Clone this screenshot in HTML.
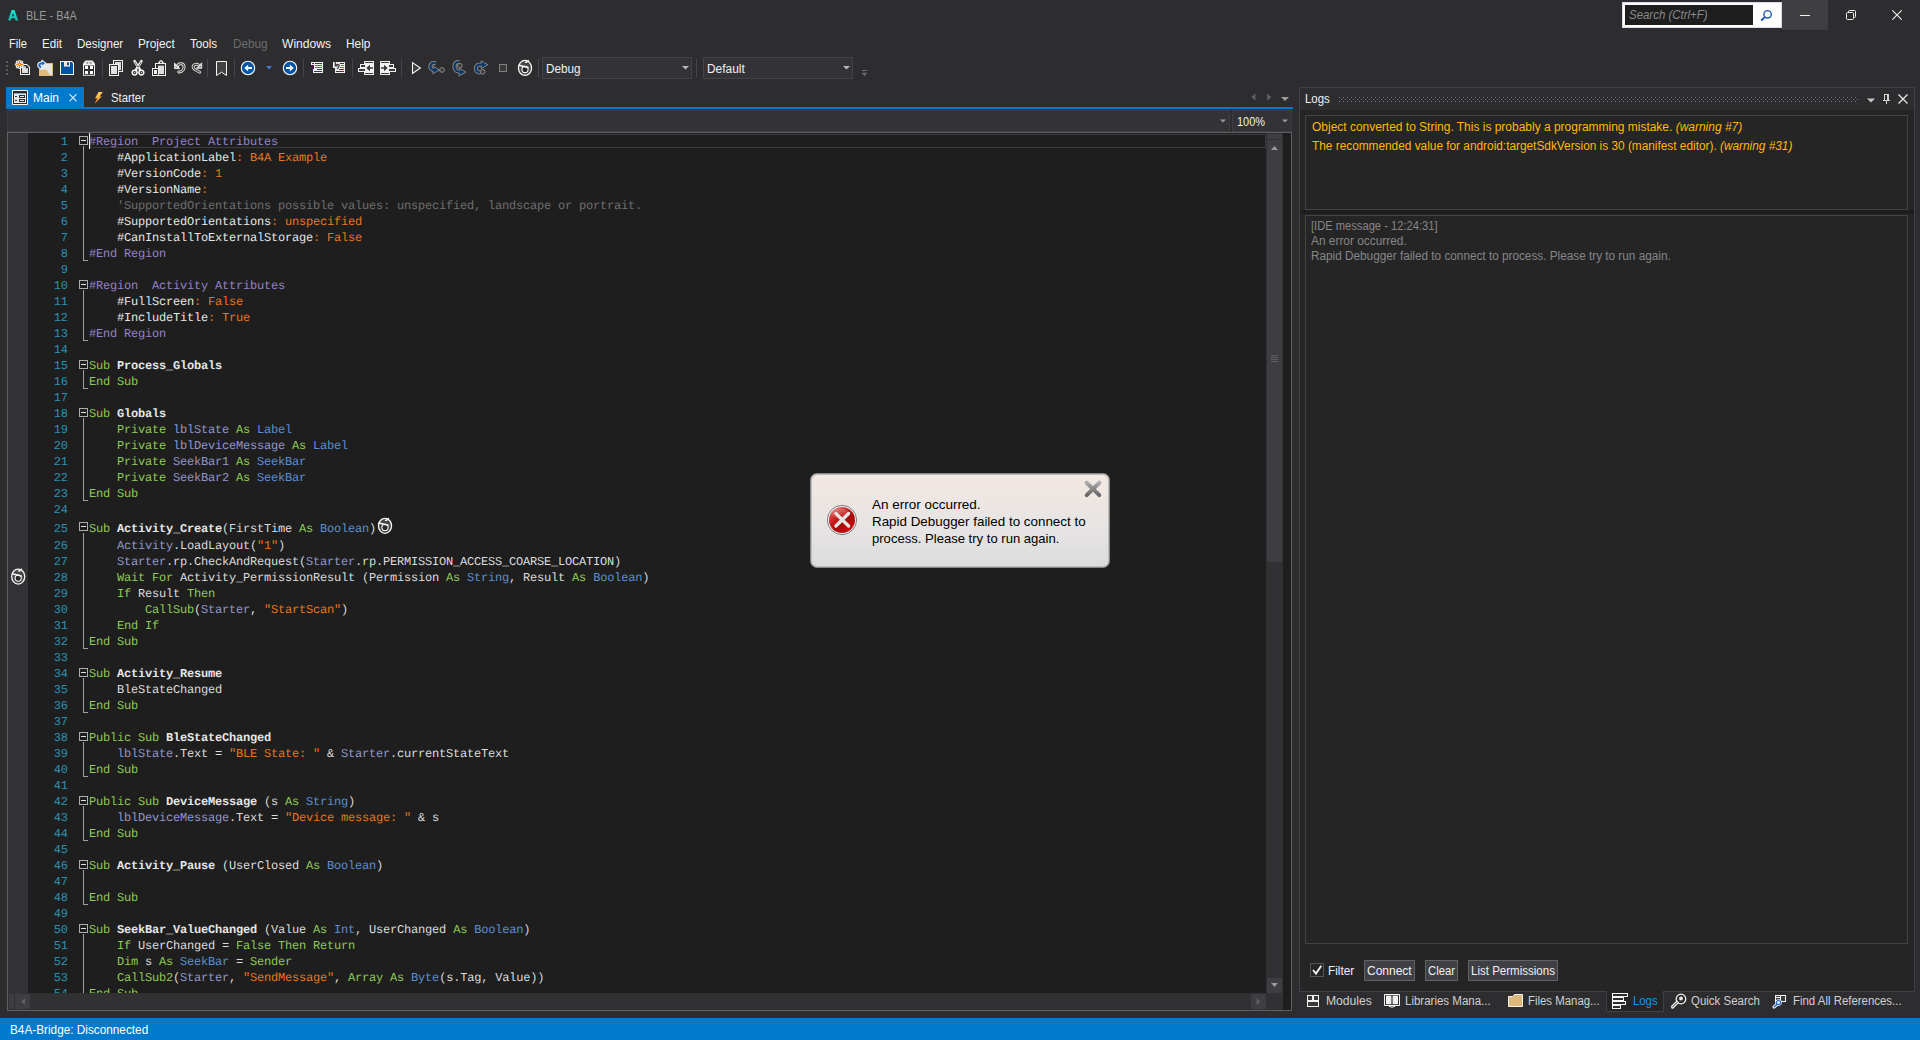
<!DOCTYPE html>
<html><head><meta charset="utf-8"><title>BLE - B4A</title>
<style>
*{margin:0;padding:0;box-sizing:border-box}
html,body{width:1920px;height:1040px;overflow:hidden;background:#2d2d30}
body{position:relative;font-family:"Liberation Sans",sans-serif;font-size:12px;color:#f1f1f1}
#root{position:absolute;left:0;top:0;width:1920px;height:1040px;overflow:hidden}
#root div,#root span.t,#root svg{position:absolute}
#root svg{overflow:visible}
.t{white-space:nowrap;line-height:16px;height:16px}
.t i{font-style:italic}
/* code */
#codewrap{left:0;top:0;width:1300px;height:1040px;overflow:hidden;clip-path:inset(133px 34px 47px 8px)}
.ln,.cl{font-family:"Liberation Mono",monospace;font-size:12px;letter-spacing:-0.200px;text-rendering:geometricPrecision;line-height:16px;height:16px;white-space:pre}
.ln{left:28px;width:39.7px;text-align:right;color:#2b91af}
.cl{left:89px;color:#dcdcdc}
.cl span{position:static}
.k{color:#8fca52}.y{color:#5b8fd0}.v{color:#9197c9}.s{color:#e8761a}.c{color:#6e6e6e}.r{color:#9682c4}
.a{color:#e6e6e6}.o{color:#e8761a}.n{color:#e6e6e6;font-weight:bold}.p{color:#dcdcdc}
.fb{left:79px;width:9px;height:9px;border:1px solid #adadad;background:#1e1e1e}
.fb:after{content:"";position:absolute;left:1px;top:3px;width:5px;height:1px;background:#e0e0e0}
.fv{left:83px;width:1px;background:#a0a0a0}
.fh{left:83px;width:5px;height:1px;background:#a0a0a0}
.sep{width:1px;height:18px;top:59px;background:#46464a}
.btn{background:#3f3f46;border:1px solid #626262}
.dd{width:0;height:0;border:3px solid transparent;border-bottom:0}
</style></head><body><div id="root">

<!-- title bar -->
<svg style="left:8px;top:9.500px" width="10.200" height="10.500" viewBox="0 0 10.200 10.500"><defs><linearGradient id="ag" x1="0" y1="0" x2="0" y2="1"><stop offset="0" stop-color="#18ecdc"/><stop offset="1" stop-color="#14b8a6"/></linearGradient></defs><path d="M0 10.400 L3.700 0 H6.500 L10.200 10.400 H7.500 L6.800 8.300 H3.400 L2.700 10.400 Z M4 6.200 H6.200 L5.100 2.800 Z" fill="url(#ag)"/></svg>
<span class="t" style="transform-origin:0 0;transform:scaleX(0.9049);left:26.2px;top:8px;color:#999">BLE - B4A</span>

<!-- search -->
<div style="left:1622px;top:2px;width:160px;height:26px;background:#fdfdfd;border:1px solid #d6deec"></div>
<div style="left:1625px;top:5px;width:128px;height:20px;background:#1e1e1e"></div>
<span class="t" style="transform-origin:0 0;transform:scaleX(0.9531);left:1629.2px;top:7px;color:#8a8a8a;font-style:italic">Search (Ctrl+F)</span>
<svg style="left:1759px;top:8.500px" width="14" height="14" viewBox="0 0 14 14"><circle cx="8.600" cy="5.300" r="3.700" fill="#f4f8ff" stroke="#2258b0" stroke-width="1.400"/><path d="M5.900 8.100 L2.200 11.500" stroke="#1e4fa8" stroke-width="1.900"/></svg>
<div style="left:1782px;top:0;width:46px;height:30px;background:#3f3f41"></div>
<div style="left:1800px;top:15px;width:10px;height:1px;background:#f1f1f1"></div>
<svg style="left:1846px;top:10px" width="10" height="10" viewBox="0 0 10 10"><path d="M2.500 2.500 V1.500 Q2.500 0.500 3.500 0.500 H8.500 Q9.500 0.500 9.500 1.500 V6.500 Q9.500 7.500 8.500 7.500 H7.500" fill="none" stroke="#f1f1f1"/><rect x="0.500" y="2.500" width="7" height="7" rx="1" fill="none" stroke="#f1f1f1"/></svg>
<svg style="left:1892px;top:10px" width="10" height="10" viewBox="0 0 10 10"><path d="M0.300 0.300 L9.700 9.700 M9.700 0.300 L0.300 9.700" stroke="#f1f1f1" stroke-width="1.100"/></svg>

<!-- menu -->
<span class="t" style="transform-origin:0 0;transform:scaleX(0.9305);left:9.2px;top:36px">File</span>
<span class="t" style="transform-origin:0 0;transform:scaleX(0.9668);left:42px;top:36px">Edit</span>
<span class="t" style="transform-origin:0 0;transform:scaleX(0.9619);left:77px;top:36px">Designer</span>
<span class="t" style="transform-origin:0 0;transform:scaleX(0.9824);left:138.2px;top:36px">Project</span>
<span class="t" style="transform-origin:0 0;transform:scaleX(0.9709);left:190px;top:36px">Tools</span>
<span class="t" style="transform-origin:0 0;transform:scaleX(0.9753);left:232.5px;top:36px;color:#6d6d6d">Debug</span>
<span class="t" style="transform-origin:0 0;transform:scaleX(1.0064);left:282px;top:36px">Windows</span>
<span class="t" style="transform-origin:0 0;transform:scaleX(0.9924);left:346.2px;top:36px">Help</span>

<!-- toolbar -->
<svg style="left:0;top:56px" width="900" height="26" viewBox="0 56 900 26">
<!-- grip -->
<g fill="#5a5a5e" shape-rendering="crispEdges"><rect x="6" y="61" width="2" height="2"/><rect x="6" y="65" width="2" height="2"/><rect x="6" y="69" width="2" height="2"/><rect x="6" y="73" width="2" height="2"/></g>
<!-- separators -->
<g fill="#46464a" shape-rendering="crispEdges"><rect x="102" y="59" width="1" height="18"/><rect x="207" y="59" width="1" height="18"/><rect x="234" y="59" width="1" height="18"/><rect x="303" y="59" width="1" height="18"/><rect x="352" y="59" width="1" height="18"/><rect x="401" y="59" width="1" height="18"/><rect x="538" y="59" width="1" height="18"/><rect x="696" y="59" width="1" height="18"/></g>
<!-- new -->
<g>
<path d="M20 64 H27 L30 67 V75 H20 Z" fill="#f5f5f5"/>
<path d="M21 65 H26.600 L29 67.400 V74 H21 Z" fill="#2d2d30"/>
<path d="M22 66.300 H25.800 V68.300 H28 V73 H22 Z" fill="#dedede"/>
<g stroke="#f1f1f1" stroke-width="2.6" stroke-linecap="round" opacity="0.95"><path d="M19.5 61 V68 M16 64.5 H23 M17 62 L22 67 M22 62 L17 67"/></g>
<g stroke="#e08a10" stroke-width="1" stroke-linecap="butt"><path d="M19.5 60.7 V68.3 M15.7 64.5 H23.3 M16.9 61.9 L22.1 67.1 M22.1 61.9 L16.9 67.1"/></g>
<circle cx="19.5" cy="64.5" r="1.7" fill="#e08a10"/><circle cx="19.5" cy="64.5" r="0.7" fill="#fff"/>
</g>
<!-- open -->
<g>
<path d="M39 63 H53 V76 H39 Z" fill="#dcb67a"/>
<path d="M40 64 H52 V75 H40 Z" fill="#e6e6e6"/>
<path d="M39 69.800 H46.600 L50 74.900 H39 Z" fill="#e3b976"/>
<path d="M41 67.400 C38.200 66.600 38 63 42.600 63.100" fill="none" stroke="#f1f1f1" stroke-width="3.600" stroke-linecap="round"/>
<path d="M42 60.300 L45.700 63.200 L42 66 Z" fill="#f1f1f1" stroke="#f1f1f1" stroke-width="1.200" stroke-linejoin="round"/>
<path d="M41.200 67.300 C38.600 66.600 38.300 63.200 42.600 63.200" fill="none" stroke="#1464c8" stroke-width="1.900"/>
<path d="M42.300 61 L45.100 63.200 L42.300 65.400 Z" fill="#1464c8"/>
</g>
<!-- save -->
<g>
<path d="M60 61 H72 L74 63 V75 H60 Z" fill="#f5f0ea"/>
<path d="M61 62 H71.6 L73 63.4 V74 H61 Z" fill="#0054a6"/>
<rect x="64" y="62" width="6" height="4.6" fill="#f3e9df"/>
<rect x="67" y="62.4" width="2" height="2.8" fill="#0054a6"/>
</g>
<!-- gift/grid -->
<g>
<path d="M85.500 60.600 H92.500 L95 63.500 V75.800 H83 V63.500 Z" fill="#f1f1f1"/>
<path d="M84 65.500 H94 V74.800 H84 Z" fill="#2d2d30"/>
<g fill="#fff" shape-rendering="crispEdges"><rect x="85" y="66" width="3" height="3"/><rect x="90" y="66" width="3" height="3"/><rect x="85" y="71" width="3" height="3"/><rect x="90" y="71" width="3" height="3"/></g>
<ellipse cx="87.300" cy="62.800" rx="1.300" ry="0.900" fill="#8a8a8a"/><ellipse cx="90.700" cy="62.800" rx="1.300" ry="0.900" fill="#8a8a8a"/>
<path d="M88.700 65 V74.800" stroke="#4a4a4c" stroke-width="0.600"/>
</g>
<!-- copy -->
<g shape-rendering="crispEdges">
<rect x="113" y="60" width="10" height="12" fill="#f1f1f1"/><rect x="114" y="61" width="8" height="10" fill="#2d2d30"/><rect x="115" y="62" width="6" height="8" fill="#dcdcdc"/>
<rect x="109" y="64" width="10" height="12" fill="#f1f1f1"/><rect x="110" y="65" width="8" height="10" fill="#2d2d30"/><rect x="111" y="66" width="6" height="8" fill="#e2e2e2"/>
</g>
<!-- cut -->
<g fill="none" stroke-linecap="round">
<path d="M134.6 61.2 L141 71.5 M141.4 61.2 L135 71.5" stroke="#f1f1f1" stroke-width="2.6"/>
<path d="M134.9 62 L138 67.3 L141.1 62" stroke="#3a3a3c" stroke-width="0.7"/>
<circle cx="134.6" cy="72.6" r="2.4" stroke="#f1f1f1" stroke-width="1.5" fill="#2d2d30"/>
<circle cx="141.4" cy="72.6" r="2.4" stroke="#f1f1f1" stroke-width="1.5" fill="#2d2d30"/>
<circle cx="134.6" cy="72.6" r="0.7" fill="#e6e6e6" stroke="none"/><circle cx="141.4" cy="72.6" r="0.7" fill="#e6e6e6" stroke="none"/>
<circle cx="138" cy="69.2" r="0.7" fill="#2d2d30" stroke="none"/><circle cx="138" cy="72.6" r="0.6" fill="#f1f1f1" stroke="none"/>
</g>
<!-- paste -->
<g>
<path d="M155 63 H158 L160 60.3 H162 L164 63 H166 V76 H155 Z" fill="#f1f1f1"/>
<path d="M156 64 H165 V75 H156 Z" fill="#2d2d30"/>
<path d="M158 65.6 H164 V74 H158 Z" fill="#dcdcdc"/>
<circle cx="161" cy="62.3" r="0.9" fill="#2d2d30"/>
<rect x="152" y="68" width="7" height="8" fill="#f1f1f1"/><rect x="153" y="69" width="5" height="6" fill="#2d2d30"/><rect x="154" y="70" width="3" height="4" fill="#f1f1f1"/>
<rect x="159" y="74" width="6" height="1" fill="#2d2d30"/>
</g>
<!-- undo -->
<g fill="none">
<path d="M177.400 66.200 C178.600 62.600 184.800 62.800 184 67.800 C183.600 70.400 181.200 72.200 178.800 71.900" stroke="#e8e8e8" stroke-width="3" stroke-linecap="round"/>
<path d="M177.400 66.200 C178.600 62.600 184.800 62.800 184 67.800 C183.600 70.400 181.200 72.200 178.800 71.900" stroke="#3a3a3c" stroke-width="1.100" stroke-linecap="round"/>
<path d="M174.500 63 V68.600 H179.800 Z" fill="#f5f5f5" stroke="#f5f5f5" stroke-width="0.800" stroke-linejoin="round"/>
<path d="M175.500 65.800 V67.600 H177.300 Z" fill="#3a3a3c"/>
</g>
<!-- redo -->
<g fill="none">
<path d="M198.800 65.200 C196.400 63.300 192.500 64.600 193.300 67.600 C193.700 69.200 197 70.800 199.800 72.200" stroke="#dcdcdc" stroke-width="2.900" stroke-linecap="round"/>
<path d="M198.800 65.200 C196.400 63.300 192.500 64.600 193.300 67.600 C193.700 69.200 197 70.800 199.800 72.200" stroke="#3a3a3c" stroke-width="1.100" stroke-linecap="round"/>
<path d="M201.700 62.800 V68.300 H196.600 Z" fill="#e8e8e8" stroke="#e8e8e8" stroke-width="0.800" stroke-linejoin="round"/>
<path d="M200.700 65.400 V67.300 H198.900 Z" fill="#3a3a3c"/>
</g>
<!-- bookmark -->
<path d="M216.5 61.5 H226.5 V75.5 L221.5 72.2 L216.5 75.5 Z" fill="#424242" stroke="#f5f5f5" stroke-width="1"/>
<!-- back / fwd -->
<circle cx="248" cy="68" r="6.7" fill="#0054a6" stroke="#f5f5f5" stroke-width="1.1"/>
<path d="M244.2 68 L248.2 64.6 V66.9 H252 V69.1 H248.2 V71.4 Z" fill="#f5f5f5"/>
<path d="M266 66 H272 L269 69.4 Z" fill="#4a7dc9"/>
<circle cx="290" cy="68" r="6.7" fill="#0054a6" stroke="#f5f5f5" stroke-width="1.1"/>
<path d="M293.8 68 L289.8 64.6 V66.9 H286 V69.1 H289.8 V71.4 Z" fill="#f5f5f5"/>
<!-- comment -->
<g shape-rendering="crispEdges">
<path d="M311 62 H323 V73 H313 V69 H314 V65 H311 Z" fill="#f1f1f1"/>
<rect x="312" y="63" width="2" height="1" fill="#3a3a3c"/><rect x="315" y="63" width="7" height="1" fill="#3a3a3c"/>
<rect x="315" y="65" width="7" height="1" fill="#2f9a2f"/><rect x="315" y="67" width="7" height="1" fill="#2f9a2f"/>
<rect x="317" y="69" width="5" height="1" fill="#3a3a3c"/><rect x="314" y="71" width="8" height="1" fill="#3a3a3c"/>
</g>
<!-- uncomment -->
<g>
<g shape-rendering="crispEdges">
<path d="M333 62 H345 V73 H335 V68 H333 Z" fill="#f1f1f1"/>
<rect x="340" y="63" width="4" height="1" fill="#3a3a3c"/>
<rect x="341" y="65" width="3" height="1" fill="#2f9a2f"/><rect x="340" y="67" width="4" height="1" fill="#2f9a2f"/>
<rect x="339" y="69" width="5" height="1" fill="#3a3a3c"/><rect x="336" y="71" width="8" height="1" fill="#3a3a3c"/>
</g>
<path d="M335.3 61 V66 H338.2 M335.3 66 C338 62.5 341.5 65 337 69" fill="none" stroke="#3a3a3c" stroke-width="1.2"/>
</g>
<!-- outdent -->
<g shape-rendering="crispEdges">
<path d="M364 61 H374 V75 H364 V72 H358 V68 H360 V64 H364 Z" fill="#f1f1f1"/>
<rect x="365" y="62" width="8" height="1" fill="#3a3a3c"/><rect x="365" y="73" width="8" height="1" fill="#3a3a3c"/>
<rect x="361" y="65" width="4" height="2" fill="#3a3a3c"/><rect x="359" y="69" width="6" height="2" fill="#3a3a3c"/>
</g>
<path d="M366.3 68 L370 64.8 V67.2 H373 V68.8 H370 V71.2 Z" fill="#3a3a3c"/>
<!-- indent -->
<g shape-rendering="crispEdges">
<path d="M380 61 H390 V64 H394 V68 H396 V72 H390 V75 H380 Z" fill="#f1f1f1"/>
<rect x="381" y="62" width="8" height="1" fill="#3a3a3c"/><rect x="381" y="73" width="8" height="1" fill="#3a3a3c"/>
<rect x="389" y="65" width="4" height="2" fill="#3a3a3c"/><rect x="389" y="69" width="6" height="2" fill="#3a3a3c"/>
</g>
<path d="M387.7 68 L384 64.8 V67.2 H381 V68.8 H384 V71.2 Z" fill="#3a3a3c"/>
<!-- play -->
<path d="M412.5 62.6 L420.4 68 L412.5 73.4 Z" fill="#424242" stroke="#f5f5f5" stroke-width="1.1" stroke-linejoin="miter"/>
<!-- step in -->
<g>
<path d="M435.800 63.200 C430.800 61.800 428.400 67 432.400 69.600 L434.500 70.400" fill="none" stroke="#8c8c8c" stroke-width="4"/>
<path d="M433.300 66.200 L439.400 70 L432.800 73.800 Z" fill="#0d3867" stroke="#8c8c8c" stroke-width="0.900" stroke-linejoin="round"/>
<path d="M435.800 63.200 C430.800 61.800 428.400 67 432.400 69.600 L434.500 70.400" fill="none" stroke="#0d3867" stroke-width="2.200"/>
<circle cx="442" cy="70" r="2.350" fill="#3a3a3c" stroke="#8c8c8c" stroke-width="1"/>
</g>
<!-- step over -->
<g>
<path d="M459 62.200 C454.200 61 453.200 68 456.400 70.800 L460.500 72.200" fill="none" stroke="#8c8c8c" stroke-width="4"/>
<path d="M459.600 68.500 L465.900 72.100 L459.100 75.900 Z" fill="#0d3867" stroke="#8c8c8c" stroke-width="0.900" stroke-linejoin="round"/>
<path d="M459 62.200 C454.200 61 453.200 68 456.400 70.800 L460.500 72.200" fill="none" stroke="#0d3867" stroke-width="2.200"/>
<circle cx="459.8" cy="65.7" r="2.350" fill="#3a3a3c" stroke="#8c8c8c" stroke-width="1"/>
</g>
<!-- step out -->
<g>
<path d="M480.400 72.700 C474.600 72.400 474.600 65 479.200 64.700 H482" fill="none" stroke="#8c8c8c" stroke-width="4"/>
<path d="M481.100 60.900 L487.900 64.700 L481.300 68.600 Z" fill="#0d3867" stroke="#8c8c8c" stroke-width="0.900" stroke-linejoin="round"/>
<path d="M480.400 72.700 C474.600 72.400 474.600 65 479.200 64.700 H482" fill="none" stroke="#0d3867" stroke-width="2.200"/>
<circle cx="482.7" cy="71.8" r="2.350" fill="#3a3a3c" stroke="#8c8c8c" stroke-width="1"/>
</g>
<!-- stop -->
<rect x="499.5" y="64.5" width="7" height="7" fill="#3a3a3c" stroke="#808080" stroke-width="1"/>
<!-- restart -->
<g fill="none" stroke="#f5f5f5" stroke-linecap="round" stroke-linejoin="round">
<ellipse cx="525" cy="67.950" rx="6.550" ry="7.500" stroke-width="1.300" fill="#454547"/>
<circle cx="525" cy="69.500" r="3.100" fill="#262628" stroke-width="1.100"/>
<path d="M519.200 65.200 L528 67.400" stroke-width="1.500"/>
<path d="M528.500 60.400 L525.300 62.500 H526.900" stroke-width="1.100"/>
</g>
<!-- overflow -->
<rect x="862" y="70" width="5" height="1" fill="#707072" shape-rendering="crispEdges"/>
<path d="M861.800 72.800 H867.200 L864.500 76.200 Z" fill="#6c6c6e"/>
</svg>

<div style="left:542px;top:57px;width:150px;height:22px;background:#333337;border:1px solid #434346"></div>
<span class="t" style="transform-origin:0 0;transform:scaleX(0.9753);left:546.2px;top:61px">Debug</span>

<div style="left:703px;top:57px;width:150px;height:22px;background:#333337;border:1px solid #434346"></div>
<span class="t" style="transform-origin:0 0;transform:scaleX(0.9913);left:706.900px;top:61px">Default</span>


<svg style="left:670px;top:60px" width="200" height="16" viewBox="670 60 200 16"><path d="M682 65.900 H689 L685.500 69.400 Z" fill="#b8b8b8"/><path d="M843 65.900 H850 L846.500 69.400 Z" fill="#b8b8b8"/></svg>

<!-- editor tabs -->
<div style="left:6px;top:87px;width:78px;height:20px;background:#007acc"></div>
<div style="left:6px;top:107px;width:1287px;height:2px;background:#007acc"></div>
<span class="t" style="transform-origin:0 0;transform:scaleX(0.9994);left:33px;top:90px;color:#fff">Main</span>
<span class="t" style="transform-origin:0 0;transform:scaleX(0.9413);left:111.3px;top:90px;color:#f1f1f1">Starter</span>

<!-- editor top bar -->
<div style="left:7px;top:110px;width:1223px;height:22px;background:#333337;border:1px solid #3c3c41"></div>
<div style="left:1232px;top:110px;width:60px;height:22px;background:#333337;border:1px solid #3c3c41"></div>
<svg style="left:0;top:84px" width="1300" height="50" viewBox="0 84 1300 50">
<!-- main form icon -->
<rect x="12" y="90" width="16" height="15" rx="1" fill="#f5f5f5"/>
<rect x="13" y="91" width="14" height="13" fill="#2d2d30"/>
<rect x="14" y="93.4" width="12" height="9.6" fill="#e8e8e8"/>
<g shape-rendering="crispEdges" fill="#2d2d30">
<rect x="15" y="96" width="2" height="1"/><rect x="15" y="100" width="2" height="1"/>
<rect x="19" y="95" width="6" height="3"/><rect x="19" y="99" width="6" height="3"/></g>
<g shape-rendering="crispEdges" fill="#e8e8e8"><rect x="20" y="96" width="4" height="1"/><rect x="20" y="100" width="4" height="1"/></g>
<!-- close x -->
<path d="M69.5 94.2 L76.5 101.4 M76.5 94.2 L69.5 101.4" stroke="#d6ebfa" stroke-width="1.2" fill="none"/>
<!-- lightning -->
<defs><linearGradient id="lg" x1="0" y1="0" x2="0.3" y2="1"><stop offset="0" stop-color="#ffe066"/><stop offset="0.5" stop-color="#ffb84a"/><stop offset="1" stop-color="#e8563a"/></linearGradient></defs>
<path d="M98.6 92 L102.8 92 L99.6 96.4 L101.8 96.4 L94.6 104 L97.2 98.2 L95 98.2 Z" fill="url(#lg)"/>
<!-- tab strip right buttons -->
<path d="M1255.500 93.300 V100.700 L1251.300 97 Z" fill="#5e5e62"/>
<path d="M1267.200 93.300 V100.700 L1271.400 97 Z" fill="#5e5e62"/>
<path d="M1281 97 H1289 L1285 101 Z" fill="#a0a0a0"/>
<path d="M1220 119.5 H1226 L1223 122.5 Z" fill="#999"/>
<path d="M1282 119.5 H1288 L1285 122.5 Z" fill="#999"/>
</svg>

<span class="t" style="transform-origin:0 0;transform:scaleX(0.9087);left:1236.6px;top:114px">100%</span>

<!-- editor frame -->
<div style="left:7px;top:132px;width:1285px;height:879px;background:#1e1e1e;border:1px solid #606060"></div>
<div style="left:8px;top:133px;width:20px;height:860px;background:#333337"></div>
<div id="codewrap">
<div style="left:90px;top:134px;width:1176px;height:14px;border:1px solid #3c3c3c"></div>
<div style="left:89px;top:133px;width:1px;height:16px;background:#f5f5f5"></div>
<div class="ln" style="top:134px">1</div>
<div class="cl" style="top:134px"><span class="r">#Region  Project Attributes</span></div>
<div class="ln" style="top:150px">2</div>
<div class="cl" style="top:150px"><span class="a">    #ApplicationLabel</span><span class="o">: B4A Example</span></div>
<div class="ln" style="top:166px">3</div>
<div class="cl" style="top:166px"><span class="a">    #VersionCode</span><span class="o">: 1</span></div>
<div class="ln" style="top:182px">4</div>
<div class="cl" style="top:182px"><span class="a">    #VersionName</span><span class="o">:</span></div>
<div class="ln" style="top:198px">5</div>
<div class="cl" style="top:198px"><span class="c">    'SupportedOrientations possible values: unspecified, landscape or portrait.</span></div>
<div class="ln" style="top:214px">6</div>
<div class="cl" style="top:214px"><span class="a">    #SupportedOrientations</span><span class="o">: unspecified</span></div>
<div class="ln" style="top:230px">7</div>
<div class="cl" style="top:230px"><span class="a">    #CanInstallToExternalStorage</span><span class="o">: False</span></div>
<div class="ln" style="top:246px">8</div>
<div class="cl" style="top:246px"><span class="r">#End Region</span></div>
<div class="ln" style="top:262px">9</div>
<div class="ln" style="top:278px">10</div>
<div class="cl" style="top:278px"><span class="r">#Region  Activity Attributes</span></div>
<div class="ln" style="top:294px">11</div>
<div class="cl" style="top:294px"><span class="a">    #FullScreen</span><span class="o">: False</span></div>
<div class="ln" style="top:310px">12</div>
<div class="cl" style="top:310px"><span class="a">    #IncludeTitle</span><span class="o">: True</span></div>
<div class="ln" style="top:326px">13</div>
<div class="cl" style="top:326px"><span class="r">#End Region</span></div>
<div class="ln" style="top:342px">14</div>
<div class="ln" style="top:358px">15</div>
<div class="cl" style="top:358px"><span class="k">Sub</span><span class="n"> Process_Globals</span></div>
<div class="ln" style="top:374px">16</div>
<div class="cl" style="top:374px"><span class="k">End Sub</span></div>
<div class="ln" style="top:390px">17</div>
<div class="ln" style="top:406px">18</div>
<div class="cl" style="top:406px"><span class="k">Sub</span><span class="n"> Globals</span></div>
<div class="ln" style="top:422px">19</div>
<div class="cl" style="top:422px"><span class="k">    Private</span><span class="v"> lblState</span><span class="k"> As</span><span class="y"> Label</span></div>
<div class="ln" style="top:438px">20</div>
<div class="cl" style="top:438px"><span class="k">    Private</span><span class="v"> lblDeviceMessage</span><span class="k"> As</span><span class="y"> Label</span></div>
<div class="ln" style="top:454px">21</div>
<div class="cl" style="top:454px"><span class="k">    Private</span><span class="v"> SeekBar1</span><span class="k"> As</span><span class="y"> SeekBar</span></div>
<div class="ln" style="top:470px">22</div>
<div class="cl" style="top:470px"><span class="k">    Private</span><span class="v"> SeekBar2</span><span class="k"> As</span><span class="y"> SeekBar</span></div>
<div class="ln" style="top:486px">23</div>
<div class="cl" style="top:486px"><span class="k">End Sub</span></div>
<div class="ln" style="top:502px">24</div>
<div class="ln" style="top:521px">25</div>
<div class="cl" style="top:521px"><span class="k">Sub</span><span class="n"> Activity_Create</span><span class="p">(FirstTime </span><span class="k">As</span><span class="y"> Boolean</span><span class="p">)</span></div>
<div class="ln" style="top:538px">26</div>
<div class="cl" style="top:538px"><span class="v">    Activity</span><span class="p">.LoadLayout(</span><span class="s">"1"</span><span class="p">)</span></div>
<div class="ln" style="top:554px">27</div>
<div class="cl" style="top:554px"><span class="v">    Starter</span><span class="p">.rp.CheckAndRequest(</span><span class="v">Starter</span><span class="p">.rp.PERMISSION_ACCESS_COARSE_LOCATION)</span></div>
<div class="ln" style="top:570px">28</div>
<div class="cl" style="top:570px"><span class="k">    Wait For</span><span class="p"> Activity_PermissionResult (Permission </span><span class="k">As</span><span class="y"> String</span><span class="p">, Result </span><span class="k">As</span><span class="y"> Boolean</span><span class="p">)</span></div>
<div class="ln" style="top:586px">29</div>
<div class="cl" style="top:586px"><span class="k">    If</span><span class="p"> Result </span><span class="k">Then</span></div>
<div class="ln" style="top:602px">30</div>
<div class="cl" style="top:602px"><span class="k">        CallSub</span><span class="p">(</span><span class="v">Starter</span><span class="p">, </span><span class="s">"StartScan"</span><span class="p">)</span></div>
<div class="ln" style="top:618px">31</div>
<div class="cl" style="top:618px"><span class="k">    End If</span></div>
<div class="ln" style="top:634px">32</div>
<div class="cl" style="top:634px"><span class="k">End Sub</span></div>
<div class="ln" style="top:650px">33</div>
<div class="ln" style="top:666px">34</div>
<div class="cl" style="top:666px"><span class="k">Sub</span><span class="n"> Activity_Resume</span></div>
<div class="ln" style="top:682px">35</div>
<div class="cl" style="top:682px"><span class="p">    BleStateChanged</span></div>
<div class="ln" style="top:698px">36</div>
<div class="cl" style="top:698px"><span class="k">End Sub</span></div>
<div class="ln" style="top:714px">37</div>
<div class="ln" style="top:730px">38</div>
<div class="cl" style="top:730px"><span class="k">Public Sub</span><span class="n"> BleStateChanged</span></div>
<div class="ln" style="top:746px">39</div>
<div class="cl" style="top:746px"><span class="v">    lblState</span><span class="p">.Text = </span><span class="s">"BLE State: "</span><span class="p"> &amp; </span><span class="v">Starter</span><span class="p">.currentStateText</span></div>
<div class="ln" style="top:762px">40</div>
<div class="cl" style="top:762px"><span class="k">End Sub</span></div>
<div class="ln" style="top:778px">41</div>
<div class="ln" style="top:794px">42</div>
<div class="cl" style="top:794px"><span class="k">Public Sub</span><span class="n"> DeviceMessage</span><span class="p"> (s </span><span class="k">As</span><span class="y"> String</span><span class="p">)</span></div>
<div class="ln" style="top:810px">43</div>
<div class="cl" style="top:810px"><span class="v">    lblDeviceMessage</span><span class="p">.Text = </span><span class="s">"Device message: "</span><span class="p"> &amp; s</span></div>
<div class="ln" style="top:826px">44</div>
<div class="cl" style="top:826px"><span class="k">End Sub</span></div>
<div class="ln" style="top:842px">45</div>
<div class="ln" style="top:858px">46</div>
<div class="cl" style="top:858px"><span class="k">Sub</span><span class="n"> Activity_Pause</span><span class="p"> (UserClosed </span><span class="k">As</span><span class="y"> Boolean</span><span class="p">)</span></div>
<div class="ln" style="top:874px">47</div>
<div class="ln" style="top:890px">48</div>
<div class="cl" style="top:890px"><span class="k">End Sub</span></div>
<div class="ln" style="top:906px">49</div>
<div class="ln" style="top:922px">50</div>
<div class="cl" style="top:922px"><span class="k">Sub</span><span class="n"> SeekBar_ValueChanged</span><span class="p"> (Value </span><span class="k">As</span><span class="y"> Int</span><span class="p">, UserChanged </span><span class="k">As</span><span class="y"> Boolean</span><span class="p">)</span></div>
<div class="ln" style="top:938px">51</div>
<div class="cl" style="top:938px"><span class="k">    If</span><span class="p"> UserChanged = </span><span class="k">False Then Return</span></div>
<div class="ln" style="top:954px">52</div>
<div class="cl" style="top:954px"><span class="k">    Dim</span><span class="p"> s </span><span class="k">As</span><span class="y"> SeekBar</span><span class="p"> = </span><span class="k">Sender</span></div>
<div class="ln" style="top:970px">53</div>
<div class="cl" style="top:970px"><span class="k">    CallSub2</span><span class="p">(</span><span class="v">Starter</span><span class="p">, </span><span class="s">"SendMessage"</span><span class="p">, </span><span class="k">Array As</span><span class="y"> Byte</span><span class="p">(s.Tag, Value))</span></div>
<div class="ln" style="top:986px">54</div>
<div class="cl" style="top:986px"><span class="k">End Sub</span></div>
<div class="fb" style="top:136px"></div>
<div class="fv" style="top:146px;height:115px"></div>
<div class="fh" style="top:260px"></div>
<div class="fb" style="top:280px"></div>
<div class="fv" style="top:290px;height:51px"></div>
<div class="fh" style="top:340px"></div>
<div class="fb" style="top:360px"></div>
<div class="fv" style="top:370px;height:19px"></div>
<div class="fh" style="top:388px"></div>
<div class="fb" style="top:408px"></div>
<div class="fv" style="top:418px;height:83px"></div>
<div class="fh" style="top:500px"></div>
<div class="fb" style="top:522px"></div>
<div class="fv" style="top:533px;height:116px"></div>
<div class="fh" style="top:648px"></div>
<div class="fb" style="top:668px"></div>
<div class="fv" style="top:678px;height:35px"></div>
<div class="fh" style="top:712px"></div>
<div class="fb" style="top:732px"></div>
<div class="fv" style="top:742px;height:35px"></div>
<div class="fh" style="top:776px"></div>
<div class="fb" style="top:796px"></div>
<div class="fv" style="top:806px;height:35px"></div>
<div class="fh" style="top:840px"></div>
<div class="fb" style="top:860px"></div>
<div class="fv" style="top:870px;height:35px"></div>
<div class="fh" style="top:904px"></div>
<div class="fb" style="top:924px"></div>
<div class="fv" style="top:934px;height:67px"></div>
<div class="fh" style="top:1000px"></div>
</div>
<!-- scrollbars -->
<div style="left:1266px;top:133px;width:17px;height:860px;background:#313134"></div>
<div style="left:1267px;top:156px;width:15px;height:406px;background:#3e3e42"></div>
<div style="left:8px;top:993px;width:1275px;height:17px;background:#313134"></div>

<!-- logs panel -->
<div style="left:1299px;top:87px;width:616px;height:905px;background:#252526;border:1px solid #3f3f46"></div>
<div style="left:1300px;top:88px;width:614px;height:22px;background:#2d2d30"></div>
<span class="t" style="transform-origin:0 0;transform:scaleX(0.9489);left:1305.2px;top:91px">Logs</span>
<div style="left:1305px;top:115px;width:603px;height:95px;border:1px solid #434346;background:#252526"></div>
<span class="t" style="transform-origin:0 0;transform:scaleX(0.9974);left:1311.5px;top:119px;color:#ffb900">Object converted to String. This is probably a programming mistake. <i>(warning #7)</i></span>
<span class="t" style="transform-origin:0 0;transform:scaleX(0.9866);left:1311.5px;top:138px;color:#ffb900">The recommended value for android:targetSdkVersion is 30 (manifest editor). <i>(warning #31)</i></span>
<div style="left:1300px;top:210px;width:614px;height:4px;background:#1e1e1e"></div>
<div style="left:1305px;top:215px;width:603px;height:729px;border:1px solid #434346;background:#252526"></div>
<span class="t" style="transform-origin:0 0;transform:scaleX(0.9296);left:1310.5px;top:218px;color:#868686">[IDE message - 12:24:31]</span>
<span class="t" style="transform-origin:0 0;transform:scaleX(0.9896);left:1310.5px;top:233px;color:#868686">An error occurred.</span>
<span class="t" style="transform-origin:0 0;transform:scaleX(0.9804);left:1310.5px;top:248px;color:#868686">Rapid Debugger failed to connect to process. Please try to run again.</span>

<div style="left:1310px;top:963px;width:14px;height:14px;border:1px solid #555;background:#252526"></div>
<span class="t" style="transform-origin:0 0;transform:scaleX(0.9823);left:1328.3px;top:963px">Filter</span>
<div class="btn" style="left:1364px;top:960px;width:51px;height:21px"></div>
<span class="t" style="transform-origin:0 0;transform:scaleX(0.9999);left:1366.900px;top:963px">Connect</span>
<div class="btn" style="left:1425px;top:960px;width:33px;height:21px"></div>
<span class="t" style="transform-origin:0 0;transform:scaleX(0.9377);left:1428.3px;top:963px">Clear</span>
<div class="btn" style="left:1468px;top:960px;width:90px;height:21px"></div>
<span class="t" style="transform-origin:0 0;transform:scaleX(0.9604);left:1471.3px;top:963px">List Permissions</span>

<!-- bottom tabs -->
<div style="left:1606px;top:991px;width:58px;height:21px;background:#252526;border:1px solid #3f3f46;border-top:0"></div>
<span class="t" style="transform-origin:0 0;transform:scaleX(1.0119);left:1326.3px;top:993px;color:#d0d0d0">Modules</span>
<span class="t" style="transform-origin:0 0;transform:scaleX(0.9589);left:1405.3px;top:993px;color:#d0d0d0">Libraries Mana...</span>
<span class="t" style="transform-origin:0 0;transform:scaleX(0.9499);left:1528.3px;top:993px;color:#d0d0d0">Files Manag...</span>
<span class="t" style="transform-origin:0 0;transform:scaleX(0.9450);left:1633.3px;top:993px;color:#0e97f0">Logs</span>
<span class="t" style="transform-origin:0 0;transform:scaleX(0.9565);left:1691.3px;top:993px;color:#d0d0d0">Quick Search</span>
<span class="t" style="transform-origin:0 0;transform:scaleX(0.9521);left:1793.3px;top:993px;color:#d0d0d0">Find All References...</span>
<svg style="left:1290px;top:80px" width="630" height="940" viewBox="1290 80 630 940">
<!-- logs header dotted grip -->
<defs><pattern id="dots" x="1339" y="97" width="4" height="4" patternUnits="userSpaceOnUse"><rect x="0" y="0" width="1" height="1" fill="#77777b"/><rect x="2" y="2" width="1" height="1" fill="#77777b"/></pattern></defs>
<rect x="1339" y="97" width="519" height="5" fill="url(#dots)" shape-rendering="crispEdges"/>
<path d="M1867 98.5 H1875 L1871 102.5 Z" fill="#c8c8c8"/>
<g fill="none" stroke="#d4d4d4" stroke-width="1" shape-rendering="crispEdges"><path d="M1884.500 94.500 H1888.500 M1884.500 94 V100 M1887.500 94 V100 M1888.500 94 V100 M1883 100.500 H1890 M1886.500 101 V104"/></g>
<path d="M1898.5 94.5 L1907.5 103.5 M1907.5 94.5 L1898.5 103.5" stroke="#e0e0e0" stroke-width="1.4"/>
<!-- checkbox tick -->
<path d="M1313 970 L1316 973.600 L1321.300 965.700" fill="none" stroke="#f1f1f1" stroke-width="1.900"/>
<!-- modules -->
<g shape-rendering="crispEdges"><rect x="1307" y="995" width="12" height="12" fill="#f1f1f1"/><rect x="1308" y="996" width="4" height="4" fill="#3a3a3c"/><rect x="1314" y="996" width="4" height="4" fill="#3a3a3c"/><rect x="1308" y="1002" width="10" height="4" fill="#3a3a3c"/></g>
<!-- libraries (book) -->
<g><rect x="1384" y="994" width="16" height="12" rx="1" fill="#f5f5f5"/><rect x="1385" y="995" width="14" height="10" fill="#2d2d30"/><rect x="1386" y="995.600" width="5.400" height="8.600" fill="#efefef"/><rect x="1392.600" y="995.600" width="5.400" height="8.600" fill="#efefef"/><path d="M1389 1006.300 L1392 1007.200 L1395 1006.300" stroke="#f5f5f5" fill="none"/></g>
<!-- files (folder) -->
<path d="M1508.500 996.500 H1512.500 L1514.500 994.500 H1522.500 V1006.500 H1508.500 Z" fill="#dcb67a" stroke="#f7f1e6" stroke-width="1"/>
<!-- logs icon -->
<g shape-rendering="crispEdges" fill="#f5f5f5"><rect x="1612" y="993" width="16" height="4"/><rect x="1612" y="997" width="12" height="4"/><rect x="1612" y="1001" width="14" height="4"/><rect x="1612" y="1005" width="9" height="4"/></g>
<g shape-rendering="crispEdges" fill="#2d2d30"><rect x="1613" y="994" width="14" height="2"/><rect x="1613" y="998" width="10" height="2"/><rect x="1613" y="1002" width="12" height="2"/><rect x="1613" y="1006" width="7" height="2"/></g>
<!-- quick search -->
<g><circle cx="1681" cy="999" r="4.800" fill="#2d2d30" stroke="#f1f1f1" stroke-width="1.300"/><circle cx="1681" cy="998.600" r="2" fill="#e6e6e6"/><path d="M1677 1002.5 L1672.5 1007" stroke="#f1f1f1" stroke-width="3.2" stroke-linecap="round"/><path d="M1677 1002.5 L1672.5 1007" stroke="#2d2d30" stroke-width="1" stroke-linecap="round"/></g>
<!-- find all refs -->
<g><g shape-rendering="crispEdges"><rect x="1775" y="995" width="11" height="7" fill="#f5f5f5"/><rect x="1776" y="996" width="4" height="1" fill="#3a3a3c"/><rect x="1776" y="998" width="4" height="2" fill="#3a3a3c"/><rect x="1781" y="996" width="4" height="5" fill="#3a3a3c"/></g>
<path d="M1777.200 1004.200 L1774 1007" stroke="#f5f5f5" stroke-width="3.200" stroke-linecap="round"/>
<circle cx="1778.500" cy="1002.600" r="3.300" fill="#f5f5f5"/>
<circle cx="1778.500" cy="1002.600" r="2.100" fill="#eef3fb" stroke="#2a66c4" stroke-width="1.200"/>
<path d="M1777 1004.300 L1774.200 1006.800" stroke="#2a66c4" stroke-width="1.500" stroke-linecap="round"/></g>
</svg>


<!-- status bar -->
<div style="left:0;top:1018px;width:1920px;height:22px;background:#007acc"></div>
<span class="t" style="transform-origin:0 0;transform:scaleX(0.9819);left:10.1px;top:1021.5px;color:#fff">B4A-Bridge: Disconnected</span>

<!-- dialog -->
<div id="dlg" style="left:810px;top:473px;width:300px;height:95px;border-radius:7px;border:1px solid #868686;box-shadow:inset 0 0 0 1px #bdbdbd;background:linear-gradient(#f3e8e2,#e6e4e3 60%,#dcdcdc)"></div>
<span class="t" style="transform-origin:0 0;transform:scaleX(1.0366);left:872px;top:497px;color:#000;font-size:13px">An error occurred.</span>
<span class="t" style="transform-origin:0 0;transform:scaleX(1.0298);left:872px;top:513.5px;color:#000;font-size:13px">Rapid Debugger failed to connect to</span>
<span class="t" style="transform-origin:0 0;transform:scaleX(1.0052);left:872px;top:530.5px;color:#000;font-size:13px">process. Please try to run again.</span>
<svg style="left:800px;top:465px" width="320" height="110" viewBox="800 465 320 110">
<defs>
<linearGradient id="rg" x1="0.15" y1="0.1" x2="0.85" y2="0.95"><stop offset="0" stop-color="#e25a5a"/><stop offset="0.35" stop-color="#c41a1a"/><stop offset="0.6" stop-color="#a80808"/><stop offset="1" stop-color="#d01414"/></linearGradient>
<linearGradient id="gl" x1="0" y1="0" x2="0" y2="1"><stop offset="0" stop-color="#ffffff" stop-opacity="0.55"/><stop offset="1" stop-color="#ffffff" stop-opacity="0.05"/></linearGradient>
<linearGradient id="xg" gradientUnits="userSpaceOnUse" x1="0" y1="481" x2="0" y2="497"><stop offset="0" stop-color="#b4b4b4"/><stop offset="0.45" stop-color="#8a8a8a"/><stop offset="1" stop-color="#606060"/></linearGradient>
</defs>
<circle cx="842" cy="520" r="14.600" fill="#f2f2f2" stroke="#6e6e6e" stroke-width="0.900"/>
<circle cx="842" cy="520" r="13" fill="url(#rg)"/>
<ellipse cx="840" cy="513.500" rx="9" ry="5" fill="url(#gl)" opacity="0.45"/>
<path d="M835.900 513.500 L848.600 526 M848.600 513.500 L835.900 526" stroke="#e4e4e4" stroke-width="3.300" stroke-linecap="round"/>
<path d="M1086.700 482.700 L1099.300 495.100 M1099.300 482.700 L1086.700 495.100" stroke="url(#xg)" stroke-width="4" stroke-linecap="round"/>
</svg>

<svg style="left:0;top:120px" width="1300" height="900" viewBox="0 120 1300 900">
<!-- vscroll arrows -->
<rect x="1267" y="134" width="15" height="5" fill="#3e3e42"/><rect x="1267" y="140" width="15" height="16" fill="#3e3e42"/>
<path d="M1271 150 H1278 L1274.500 146 Z" fill="#999"/>
<rect x="1267" y="978" width="15" height="15" fill="#3e3e42"/>
<path d="M1271 983 H1278 L1274.500 987 Z" fill="#999"/>
<g shape-rendering="crispEdges" fill="#5e5e62"><rect x="1271" y="355" width="7" height="1"/><rect x="1271" y="357" width="7" height="1"/><rect x="1271" y="359" width="7" height="1"/><rect x="1271" y="361" width="7" height="1"/></g>
<!-- hscroll arrows -->
<rect x="9" y="994" width="5" height="15" fill="#3e3e42"/><rect x="15" y="994" width="15" height="15" fill="#3e3e42"/>
<path d="M25 998 V1005 L21 1001.500 Z" fill="#5e5e62"/>
<rect x="1251" y="994" width="15" height="15" fill="#3e3e42"/>
<path d="M1256.500 998 V1005 L1260.500 1001.500 Z" fill="#5e5e62"/>
<!-- gutter icon & line 25 icon -->
<g transform="translate(-506.800 508.600)"><g fill="none" stroke="#f5f5f5" stroke-linecap="round" stroke-linejoin="round">
<ellipse cx="525" cy="67.950" rx="6.550" ry="7.500" stroke-width="1.300" fill="#454547"/>
<circle cx="525" cy="69.500" r="3.100" fill="#262628" stroke-width="1.100"/>
<path d="M519.200 65.200 L528 67.400" stroke-width="1.500"/>
<path d="M528.500 60.400 L525.300 62.500 H526.900" stroke-width="1.100"/>
</g></g>
<g transform="translate(-140 457.900)"><g fill="none" stroke="#f5f5f5" stroke-linecap="round" stroke-linejoin="round">
<ellipse cx="525" cy="67.950" rx="6.550" ry="7.500" stroke-width="1.300" fill="#454547"/>
<circle cx="525" cy="69.500" r="3.100" fill="#262628" stroke-width="1.100"/>
<path d="M519.200 65.200 L528 67.400" stroke-width="1.500"/>
<path d="M528.500 60.400 L525.300 62.500 H526.900" stroke-width="1.100"/>
</g></g>
</svg>


</div></body></html>
